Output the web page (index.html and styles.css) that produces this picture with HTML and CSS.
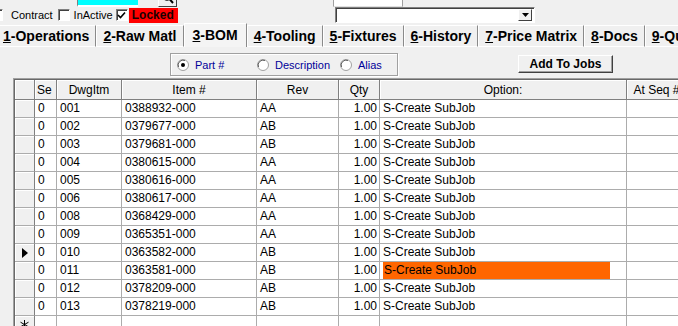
FILE: index.html
```html
<!DOCTYPE html>
<html lang="en">
<head>
    <meta charset="UTF-8">
    <title>BOM</title>
    <link rel="stylesheet" href="styles.css">
</head>
<body>
    <div class="top">
        <div class="cyanbox"></div>
        <div class="lookup">
            <svg width="16" height="16" viewBox="0 0 16 16"><circle cx="7" cy="6" r="4" fill="none" stroke="#000" stroke-width="1.5"/><path d="M9.5 9 L13 13" stroke="#000" stroke-width="2"/></svg>
        </div>
        <div class="topbox"></div>
    </div>

    <div class="flags">
        <div class="checks">
            <span class="chk cut"></span><span class="lbl">Contract</span>
            <span class="chk"></span><span class="lbl">InActive</span>
            <span class="chk"><svg width="9" height="9" viewBox="0 0 9 9"><path d="M1 4 L3.5 6.5 L8 1.5" fill="none" stroke="#000" stroke-width="1.6"/></svg></span>
            <span class="locked">Locked</span>
        </div>
        <div class="combo">
            <span class="drop"><svg width="7" height="4" viewBox="0 0 7 4"><path d="M0 0 H7 L3.5 4Z" fill="#000"/></svg></span>
        </div>
    </div>

    <nav class="tabs">
        <span class="tab first"><u>1</u>-Operations</span>
        <span class="tab"><u>2</u>-Raw Matl</span>
        <span class="tab sel"><u>3</u>-BOM</span>
        <span class="tab"><u>4</u>-Tooling</span>
        <span class="tab"><u>5</u>-Fixtures</span>
        <span class="tab"><u>6</u>-History</span>
        <span class="tab"><u>7</u>-Price Matrix</span>
        <span class="tab"><u>8</u>-Docs</span>
        <span class="tab"><u>9</u>-Quality</span>
    </nav>

    <div class="toolbar">
        <div class="radios">
            <label class="opt part">
                <svg width="12" height="12" viewBox="0 0 12 12"><circle cx="6" cy="6" r="5.5" fill="#fff" stroke="#a0a0a0"/><path d="M1.5 8 A5 5 0 0 1 8 1.5" fill="none" stroke="#606060"/><circle cx="6" cy="6" r="2" fill="#000"/></svg>
                Part #
            </label>
            <label class="opt desc">
                <svg width="12" height="12" viewBox="0 0 12 12"><circle cx="6" cy="6" r="5.5" fill="#fff" stroke="#a0a0a0"/><path d="M1.5 8 A5 5 0 0 1 8 1.5" fill="none" stroke="#606060"/></svg>
                Description
            </label>
            <label class="opt">
                <svg width="12" height="12" viewBox="0 0 12 12"><circle cx="6" cy="6" r="5.5" fill="#fff" stroke="#a0a0a0"/><path d="M1.5 8 A5 5 0 0 1 8 1.5" fill="none" stroke="#606060"/></svg>
                Alias
            </label>
        </div>
        <button class="add" type="button">Add To Jobs</button>
    </div>

    <div class="grid">
        <table>
            <colgroup>
                <col class="c-sel"><col class="c-se"><col class="c-dwg"><col class="c-item">
                <col class="c-rev"><col class="c-qty"><col class="c-opt"><col class="c-seq"><col class="c-more">
            </colgroup>
            <tr>
                <th class="sel"></th>
                <th class="left">Se</th>
                <th>DwgItm</th>
                <th>Item #</th>
                <th>Rev</th>
                <th>Qty</th>
                <th>Option:</th>
                <th>At Seq #</th>
                <th></th>
            </tr>
            <tr><td class="sel"></td><td>0</td><td>001</td><td>0388932-000</td><td>AA</td><td class="num">1.00</td><td>S-Create SubJob</td><td></td><td></td></tr>
            <tr><td class="sel"></td><td>0</td><td>002</td><td>0379677-000</td><td>AB</td><td class="num">1.00</td><td>S-Create SubJob</td><td></td><td></td></tr>
            <tr><td class="sel"></td><td>0</td><td>003</td><td>0379681-000</td><td>AB</td><td class="num">1.00</td><td>S-Create SubJob</td><td></td><td></td></tr>
            <tr><td class="sel"></td><td>0</td><td>004</td><td>0380615-000</td><td>AA</td><td class="num">1.00</td><td>S-Create SubJob</td><td></td><td></td></tr>
            <tr><td class="sel"></td><td>0</td><td>005</td><td>0380616-000</td><td>AA</td><td class="num">1.00</td><td>S-Create SubJob</td><td></td><td></td></tr>
            <tr><td class="sel"></td><td>0</td><td>006</td><td>0380617-000</td><td>AA</td><td class="num">1.00</td><td>S-Create SubJob</td><td></td><td></td></tr>
            <tr><td class="sel"></td><td>0</td><td>008</td><td>0368429-000</td><td>AA</td><td class="num">1.00</td><td>S-Create SubJob</td><td></td><td></td></tr>
            <tr><td class="sel"></td><td>0</td><td>009</td><td>0365351-000</td><td>AA</td><td class="num">1.00</td><td>S-Create SubJob</td><td></td><td></td></tr>
            <tr><td class="sel"><svg width="6" height="10" viewBox="0 0 6 10"><path d="M0 0 L6 5 L0 10Z" fill="#000"/></svg></td><td>0</td><td>010</td><td>0363582-000</td><td>AB</td><td class="num">1.00</td><td>S-Create SubJob</td><td></td><td></td></tr>
            <tr><td class="sel"></td><td>0</td><td>011</td><td>0363581-000</td><td>AB</td><td class="num">1.00</td><td><span class="hl">S-Create SubJob</span></td><td></td><td></td></tr>
            <tr><td class="sel"></td><td>0</td><td>012</td><td>0378209-000</td><td>AB</td><td class="num">1.00</td><td>S-Create SubJob</td><td></td><td></td></tr>
            <tr><td class="sel"></td><td>0</td><td>013</td><td>0378219-000</td><td>AB</td><td class="num">1.00</td><td>S-Create SubJob</td><td></td><td></td></tr>
            <tr><td class="sel"><svg width="9" height="9" viewBox="0 0 9 9"><path d="M4.5 0 V9 M0.5 2.2 L8.5 6.8 M0.5 6.8 L8.5 2.2" stroke="#000" stroke-width="1"/></svg></td><td></td><td></td><td></td><td></td><td></td><td></td><td></td><td></td></tr>
        </table>
    </div>
</body>
</html>
```

FILE: styles.css
```css
body {
    margin: 0;
    width: 678px;
    height: 326px;
    overflow: hidden;
    background-color: #f0f0f0;
    font-family: "Liberation Sans", Arial, sans-serif;
    font-size: 12px;
    color: #000;
}

/* strip cut off at the top of the window */
.top {
    display: flex;
    align-items: flex-end;
    height: 7px;
    overflow: hidden;
}
.cyanbox {
    flex-shrink: 0;
    margin-left: 77px;
    width: 61px;
    height: 18px;
    background-color: #00ffff;
    border-left: 1px solid #808080;
    border-bottom: 2px solid #ffffff;
    box-sizing: border-box;
}
.lookup {
    flex-shrink: 0;
    margin-left: 20px;
    width: 19px;
    height: 19px;
    box-sizing: border-box;
    border: 1px solid;
    border-color: #ffffff #404040 #404040 #ffffff;
    background-color: #f0f0f0;
    display: flex;
    align-items: flex-end;
    justify-content: center;
}
.topbox {
    flex-shrink: 0;
    margin-left: 156px;
    width: 70px;
    height: 18px;
    box-sizing: border-box;
    background-color: #ffffff;
    border: 1px solid #a0a0a0;
    border-bottom: 1px solid #e0e0e0;
}

/* checkboxes + combo */
.flags {
    display: flex;
    height: 16px;
}
.checks {
    width: 335px;
    flex-shrink: 0;
    display: flex;
    align-items: center;
    font-size: 11px;
}
.chk {
    flex-shrink: 0;
    width: 12px;
    height: 12px;
    box-sizing: border-box;
    background-color: #ffffff;
    border: 1px solid;
    border-color: #808080 #ffffff #ffffff #808080;
    box-shadow: inset 1px 1px #404040;
    display: flex;
    align-items: center;
    justify-content: center;
}
.chk.cut {
    margin-left: -9px;
}
.lbl {
    margin-left: 8px;
    margin-right: 5px;
}
.lbl + .chk + .lbl {
    margin-left: 4px;
    margin-right: 3px;
}
.locked {
    margin-left: 1px;
    height: 15px;
    line-height: 15px;
    padding: 0 4px 0 3px;
    background-color: #ff0000;
    color: #1a0000;
    font-weight: bold;
    font-size: 12px;
}
.combo {
    width: 200px;
    height: 16px;
    box-sizing: border-box;
    background-color: #ffffff;
    border: 1px solid;
    border-color: #808080 #ffffff #ffffff #808080;
    box-shadow: inset 1px 1px #404040;
    display: flex;
    justify-content: flex-end;
    padding: 1px;
}
.drop {
    width: 14px;
    height: 12px;
    margin-right: 1px;
    box-sizing: border-box;
    background-color: #f0f0f0;
    border: 1px solid;
    border-color: #ffffff #404040 #404040 #ffffff;
    display: flex;
    align-items: center;
    justify-content: center;
}

/* tab strip */
.tabs {
    display: flex;
    align-items: flex-end;
    height: 24px;
    margin-left: -4px;
    white-space: nowrap;
}
.tab {
    flex-shrink: 0;
    height: 20px;
    line-height: 20px;
    padding: 0 6px;
    font-size: 14px;
    font-weight: bold;
    border-top: 1px solid #ffffff;
    border-left: 1px solid #ffffff;
    border-right: 1px solid #8a8a8a;
    border-bottom: 1px solid #ffffff;
}
.tab.sel {
    height: 23px;
    line-height: 22px;
    padding: 0 8px;
    border-bottom: none;
    background-color: #f4f4f4;
}

/* option group + button */
.toolbar {
    display: flex;
    align-items: flex-start;
    height: 31px;
}
.radios {
    margin-left: 170px;
    margin-top: 6px;
    width: 228px;
    height: 23px;
    box-sizing: border-box;
    border: 1px solid #a0a0a0;
    box-shadow: inset 1px 1px #ffffff, 1px 1px #ffffff;
    display: flex;
    align-items: center;
    padding-left: 6px;
    color: #000099;
    font-size: 11px;
}
.opt {
    display: flex;
    align-items: center;
    gap: 6px;
}
.opt.part {
    width: 80px;
}
.opt.desc {
    width: 83px;
}
.add {
    margin-left: 120px;
    margin-top: 8px;
    width: 95px;
    height: 18px;
    padding: 0;
    font-family: inherit;
    font-size: 12px;
    font-weight: bold;
    color: #000;
    background-color: #f0f0f0;
    border: 1px solid;
    border-color: #ffffff #404040 #404040 #ffffff;
    box-shadow: inset -1px -1px #a0a0a0;
}

/* data grid */
.grid {
    margin-left: 13px;
    border-top: 1px solid #a0a0a0;
    border-left: 1px solid #a0a0a0;
}
table {
    border-collapse: separate;
    border-spacing: 0;
    table-layout: fixed;
    width: 752px;
    border-top: 1px solid #696969;
    border-left: 1px solid #696969;
    background-color: #ffffff;
}
.c-sel { width: 20px; }
.c-se { width: 22px; }
.c-dwg { width: 65px; }
.c-item { width: 135px; }
.c-rev { width: 82px; }
.c-qty { width: 41px; }
.c-opt { width: 247px; }
.c-seq { width: 60px; }
.c-more { width: 80px; }
th {
    height: 19px;
    padding: 0;
    font-weight: normal;
    text-align: center;
    background-color: #f0f0f0;
    border-right: 1px solid #808080;
    border-bottom: 1px solid #808080;
    box-shadow: inset 1px 1px #ffffff;
    white-space: nowrap;
    overflow: hidden;
}
th.left {
    text-align: left;
    padding-left: 2px;
}
td {
    height: 17px;
    line-height: 17px;
    padding: 0 0 0 3px;
    border-right: 1px solid #acacac;
    border-bottom: 1px solid #acacac;
    white-space: nowrap;
    overflow: hidden;
    vertical-align: middle;
}
td.sel {
    padding: 0;
    text-align: center;
    background-color: #f0f0f0;
    border-right: 1px solid #808080;
    box-shadow: inset 1px 1px #ffffff;
}
td.sel svg {
    display: block;
    margin: 0 auto;
}
td.num {
    text-align: right;
    padding: 0 2px 0 0;
}
.hl {
    display: inline-block;
    width: 227px;
    height: 17px;
    padding-left: 1px;
    box-sizing: border-box;
    background-color: #ff6600;
}
```
